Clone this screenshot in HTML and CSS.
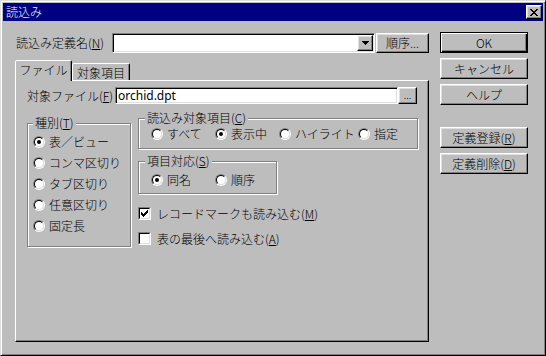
FILE: index.html
```html
<!DOCTYPE html>
<html lang="ja">
<head>
<meta charset="utf-8">
<title>読込み</title>
<link rel="stylesheet" href="styles.css">
</head>
<body>
<div class="win">
  <div class="titlebar">
    <span class="title">読込み</span>
    <span class="btn close"><svg width="8" height="7" viewBox="0 0 8 7" shape-rendering="crispEdges"><path d="M0 0h2v1H0zM6 0h2v1H6zM1 1h2v1H1zM5 1h2v1H5zM2 2h4v1H2zM3 3h2v1H3zM2 4h4v1H2zM1 5h2v1H1zM5 5h2v1H5zM0 6h2v1H0zM6 6h2v1H6z" fill="#000"/></svg></span>
  </div>
  <div class="content">
    <div class="main">
      <div class="namerow">
        <span class="namelabel">読込み定義名(<u>N</u>)</span>
        <div class="field combo"><span class="btn dropbtn"><svg width="7" height="4" viewBox="0 0 7 4" shape-rendering="crispEdges"><path d="M0 0h7v1H0zM1 1h5v1H1zM2 2h3v1H2zM3 3h1v1H3z" fill="#000"/></svg></span></div>
        <span class="btn orderbtn"><span>順序...</span></span>
      </div>
      <div class="tabs">
        <span class="tab active"><span>ファイル</span></span>
        <span class="tab"><span>対象項目</span></span>
      </div>
      <div class="panel">
        <div class="filerow">
          <span class="filelabel">対象ファイル(<u>F</u>)</span>
          <div class="field fileinput">orchid.dpt</div>
          <span class="btn browse"><span>...</span></span>
        </div>
        <div class="bodyrow">
          <fieldset class="group kind">
            <legend>種別(<u>T</u>)</legend>
            <div class="opt krow"><span class="radio on"><i></i></span><span>表／ビュー</span></div>
            <div class="opt krow"><span class="radio"><i></i></span><span>コンマ区切り</span></div>
            <div class="opt krow"><span class="radio"><i></i></span><span>タブ区切り</span></div>
            <div class="opt krow"><span class="radio"><i></i></span><span>任意区切り</span></div>
            <div class="opt krow"><span class="radio"><i></i></span><span>固定長</span></div>
          </fieldset>
          <div class="rightcol">
            <fieldset class="group target">
              <legend>読込み対象項目(<u>C</u>)</legend>
              <div class="optrow">
                <div class="opt w64"><span class="radio"><i></i></span><span>すべて</span></div>
                <div class="opt w64"><span class="radio on"><i></i></span><span>表示中</span></div>
                <div class="opt w79"><span class="radio"><i></i></span><span>ハイライト</span></div>
                <div class="opt"><span class="radio"><i></i></span><span>指定</span></div>
              </div>
            </fieldset>
            <fieldset class="group match">
              <legend>項目対応(<u>S</u>)</legend>
              <div class="optrow">
                <div class="opt w64"><span class="radio on"><i></i></span><span>同名</span></div>
                <div class="opt"><span class="radio"><i></i></span><span>順序</span></div>
              </div>
            </fieldset>
            <div class="chk first"><span class="check"><i><svg width="7" height="7" viewBox="0 0 7 7" shape-rendering="crispEdges"><path d="M0 2h1v3H0zM1 3h1v3H1zM2 4h1v3H2zM3 3h1v3H3zM4 2h1v3H4zM5 1h1v3H5zM6 0h1v3H6z" fill="#000"/></svg></i></span><span>レコードマークも読み込む(<u>M</u>)</span></div>
            <div class="chk"><span class="check"><i></i></span><span>表の最後へ読み込む(<u>A</u>)</span></div>
          </div>
        </div>
      </div>
    </div>
    <div class="side">
      <span class="btn sbtn default"><span>OK</span></span>
      <span class="btn sbtn"><span>キャンセル</span></span>
      <span class="btn sbtn"><span>ヘルプ</span></span>
      <span class="btn sbtn spaced"><span>定義登録(<u>R</u>)</span></span>
      <span class="btn sbtn"><span>定義削除(<u>D</u>)</span></span>
    </div>
  </div>
</div>
</body>
</html>
```

FILE: styles.css
```css
* { box-sizing: border-box; }
html, body { margin: 0; padding: 0; background: #bdbdbd; }
body {
  font-family: "Noto Sans CJK JP", "Noto Sans", sans-serif;
  font-size: 12px;
  font-weight: 300;
  line-height: 14px;
  color: #000;
}
u { text-decoration: underline; text-underline-offset: 1px; }

.win {
  width: 546px;
  height: 356px;
  background: #bdbdbd;
  border: 1px solid;
  border-color: #dfdfdf #000 #000 #dfdfdf;
  box-shadow: inset 1px 1px #fff, inset -1px -1px #808080;
  padding: 2px 2px 0 2px;
  display: flex;
  flex-direction: column;
}

.titlebar {
  height: 18px;
  background: #000080;
  color: #fff;
  display: flex;
  align-items: center;
  justify-content: space-between;
  padding: 0 1px 0 3px;
}
.title { line-height: 14px; }

.btn {
  display: flex;
  align-items: center;
  justify-content: center;
  background: #bdbdbd;
  border: 1px solid;
  border-color: #fff #000 #000 #fff;
  box-shadow: inset -1px -1px #808080, inset 1px 1px #dfdfdf;
  white-space: nowrap;
}
.close { width: 16px; height: 14px; }

.field {
  background: #fff;
  border: 1px solid;
  border-color: #808080 #fff #fff #808080;
  box-shadow: inset 1px 1px #000, inset -1px -1px #dfdfdf;
}

.content { display: flex; flex: 1; }

.main {
  width: 414px;
  margin-left: 12px;
  padding-top: 12px;
  display: flex;
  flex-direction: column;
}

.namerow { height: 20px; display: flex; align-items: center; }
.namelabel { width: 96px; margin-left: 1px; }
.combo {
  width: 263px;
  height: 20px;
  padding: 1px;
  display: flex;
  justify-content: flex-end;
}
.dropbtn { width: 16px; height: 16px; }
.orderbtn { width: 53px; height: 20px; margin-left: 1px; }

.tabs {
  height: 20px;
  margin-top: 7px;
  display: flex;
  align-items: flex-end;
}
.tab {
  height: 17px;
  width: 58px;
  display: flex;
  align-items: center;
  justify-content: center;
  border: 1px solid;
  border-bottom: none;
  border-color: #fff #000 transparent #fff;
  border-radius: 2px 2px 0 0;
  box-shadow: inset -1px 0 #808080;
  background: #bdbdbd;
  padding-top: 1px;
}
.tab.active {
  width: 57px;
  height: 21px;
  margin-bottom: -1px;
  position: relative;
  z-index: 1;
  padding-bottom: 3px;
}

.panel {
  width: 414px;
  height: 262px;
  border: 1px solid;
  border-color: #fff #000 #000 #fff;
  box-shadow: inset -1px -1px #808080;
  padding: 6px 0 0 11px;
}

.filerow { display: flex; align-items: center; height: 17px; }
.filelabel { width: 88px; }
.fileinput {
  width: 283px;
  height: 17px;
  padding: 1px 0 0 2px;
  line-height: 14px;
  font-family: "Noto Sans", "Noto Sans CJK JP", sans-serif;
  font-weight: 400;
}
.browse {
  width: 19px;
  height: 17px;
  font-size: 10px;
  line-height: 10px;
  align-items: flex-end;
  padding-bottom: 3px;
}

.bodyrow { display: flex; align-items: flex-start; margin-top: 7px; }

.group {
  margin: 0;
  min-width: 0;
  border: 1px solid #808080;
  box-shadow: inset 1px 1px #fff, 1px 1px #fff;
}
.group legend {
  padding: 0 2px;
  line-height: 14px;
  background: #bdbdbd;
}

.kind {
  width: 104px;
  height: 131px;
  margin-top: 5px;
  padding: 1px 0 0 5px;
}
.krow { height: 21px; }

.rightcol { margin-left: 7px; width: 280px; display: flex; flex-direction: column; }
.target { width: 280px; padding: 1px 0 6px 6px; }
.match { width: 139px; margin-top: 5px; padding: 4px 0 5px 6px; }
.target .optrow, .match .optrow { padding-left: 6px; }

.optrow { display: flex; height: 16px; align-items: center; }
.opt { display: flex; align-items: center; gap: 4px; white-space: nowrap; }
.w64 { width: 64px; flex: none; }
.w79 { width: 79px; flex: none; }

.radio {
  width: 12px;
  height: 12px;
  flex: none;
  border-radius: 50%;
  border: 1px solid;
  border-color: #808080 #fff #fff #808080;
  display: flex;
}
.radio i {
  width: 10px;
  height: 10px;
  border-radius: 50%;
  border: 1px solid;
  border-color: #000 #dfdfdf #dfdfdf #000;
  background: #fff;
  display: flex;
  align-items: center;
  justify-content: center;
}
.radio.on i::after {
  content: "";
  width: 4px;
  height: 4px;
  border-radius: 50%;
  background: #000;
}

.chk { display: flex; align-items: center; gap: 6px; height: 25px; white-space: nowrap; }
.chk.first { margin-top: 7px; }
.check {
  width: 13px;
  height: 13px;
  flex: none;
  border: 1px solid;
  border-color: #808080 #fff #fff #808080;
  display: flex;
}
.check i {
  width: 11px;
  height: 11px;
  border: 1px solid;
  border-color: #000 #dfdfdf #dfdfdf #000;
  background: #fff;
  display: flex;
  padding: 1px;
}
.check svg { display: block; }

.side {
  width: 88px;
  margin-left: 11px;
  padding-top: 11px;
  display: flex;
  flex-direction: column;
}
.sbtn { height: 21px; margin-bottom: 5px; }
.sbtn.default {
  border: 1px solid #000;
  box-shadow: inset 1px 1px #fff, inset -1px -1px #000, inset -2px -2px #808080;
}
.sbtn.spaced { margin-top: 17px; }
```
